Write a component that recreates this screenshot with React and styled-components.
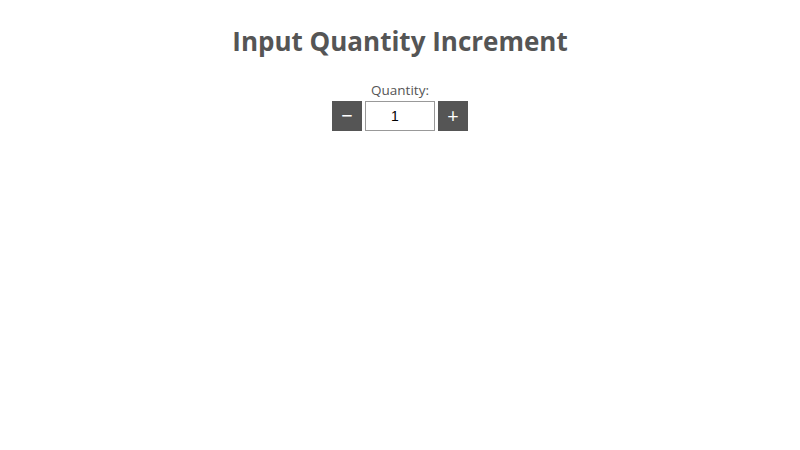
import React, { useState } from "react";
import styled, { createGlobalStyle } from "styled-components";

const Global = createGlobalStyle`
  body {
    margin: 0;
    background: #fff;
    font-family: "Open Sans", "Noto Sans", sans-serif;
    color: #555;
  }
`;

const Page = styled.div`
  display: flex;
  flex-direction: column;
  align-items: center;
  padding-top: 23px;
`;

const Title = styled.h1`
  margin: 0 0 21px;
  font-size: 26px;
  line-height: 36px;
  font-weight: 700;
  color: #555;
`;

const Label = styled.label`
  font-size: 13.5px;
  line-height: 18px;
  margin-top: 1px;
  margin-bottom: 2px;
`;

const Row = styled.div`
  display: flex;
  gap: 3px;
`;

const StepButton = styled.button`
  width: 30px;
  height: 30px;
  border: none;
  padding: 0;
  background: #555;
  color: #fff;
  font-size: 20px;
  line-height: 30px;
  font-family: "Open Sans", sans-serif;
  cursor: pointer;
`;

const Input = styled.input`
  width: 70px;
  height: 30px;
  box-sizing: border-box;
  border: 1px solid #999;
  padding: 0 10px 0 0;
  text-align: center;
  font-family: "Liberation Sans", Arial, sans-serif;
  font-size: 14px;
  color: #000;
  outline: none;
`;

export default function App() {
  const [qty, setQty] = useState(1);
  return (
    <>
      <Global />
      <Page>
        <Title>Input Quantity Increment</Title>
        <Label htmlFor="qty">Quantity:</Label>
        <Row>
          <StepButton onClick={() => setQty(Math.max(0, qty - 1))}>−</StepButton>
          <Input id="qty" value={qty} onChange={(e) => setQty(e.target.value)} />
          <StepButton onClick={() => setQty(Number(qty) + 1)}>+</StepButton>
        </Row>
      </Page>
    </>
  );
}
